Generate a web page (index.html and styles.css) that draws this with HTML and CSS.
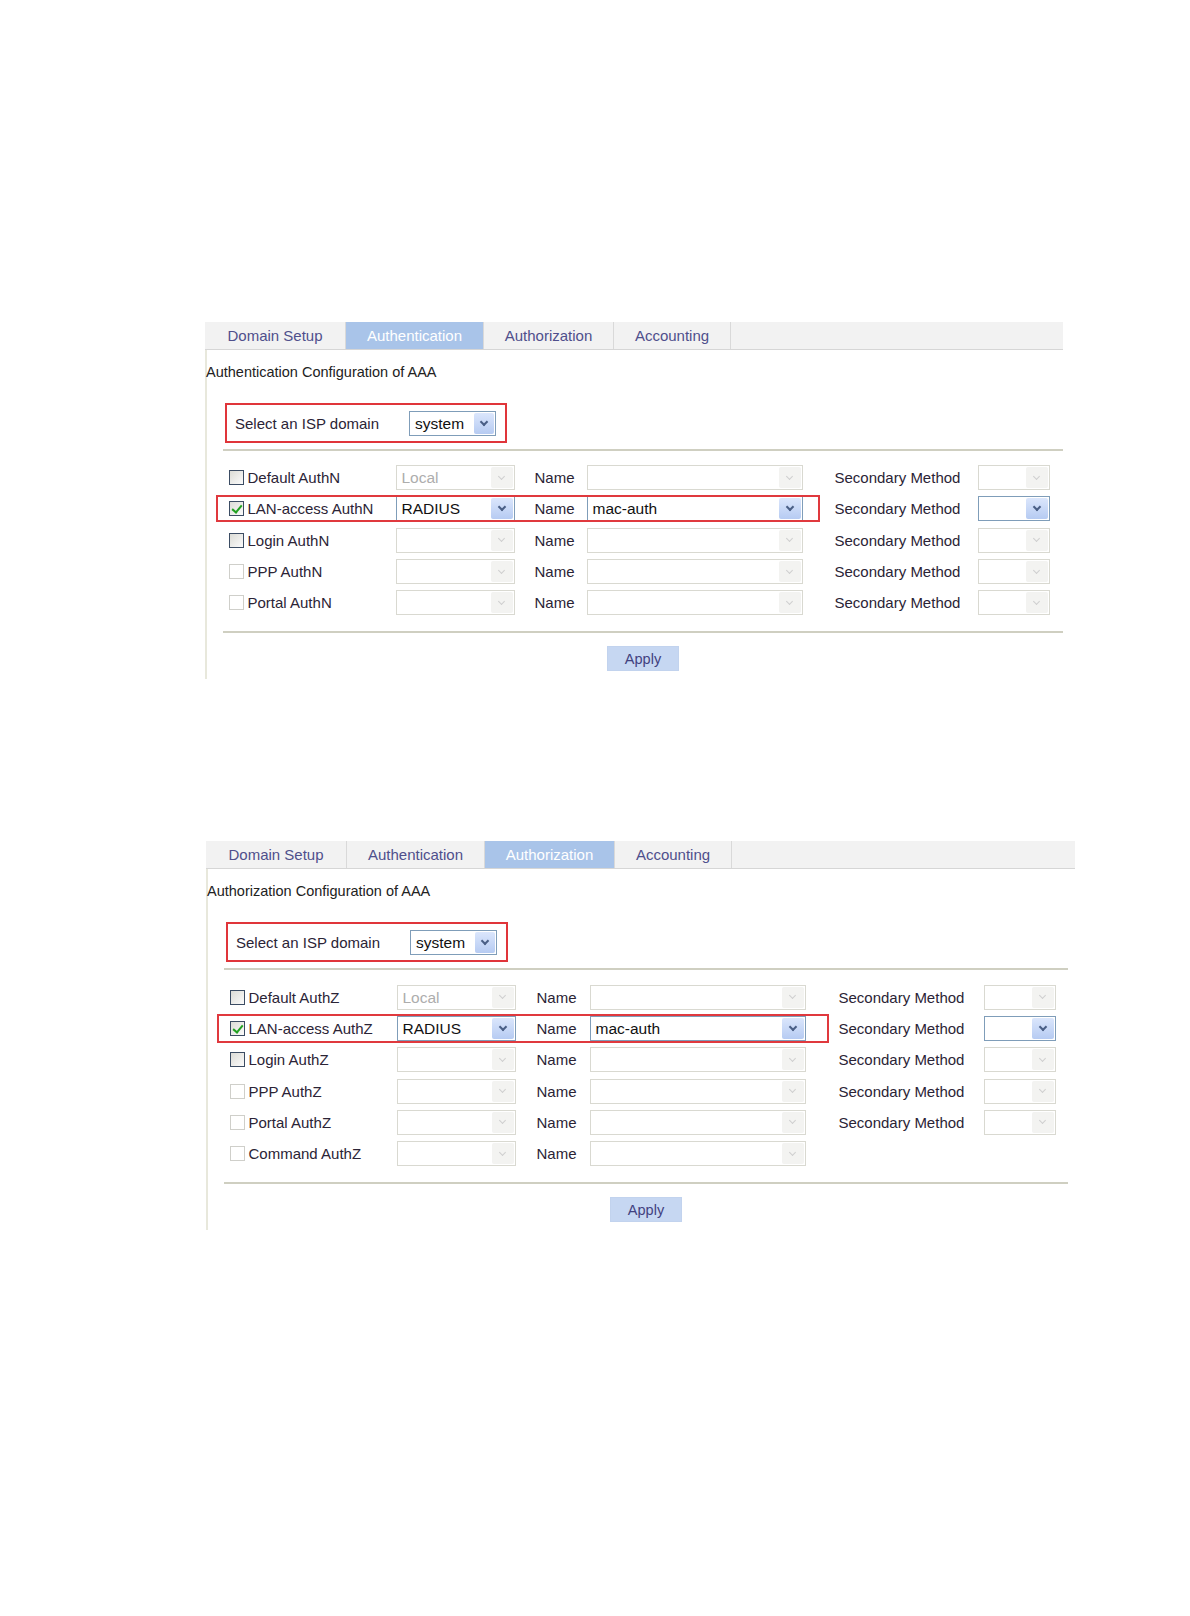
FILE: index.html
```html
<!DOCTYPE html>
<html lang="en">
<head>
    <meta charset="UTF-8">
    <title>AAA Configuration</title>
    <link rel="stylesheet" href="styles.css">
</head>
<body>
    <!-- Authentication tab -->
    <div class="panel panel-first">
        <div class="tabs">
            <div class="tab">Domain Setup</div>
            <div class="tab active">Authentication</div>
            <div class="tab">Authorization</div>
            <div class="tab">Accounting</div>
        </div>
        <div class="panel-body">
            <div class="title">Authentication Configuration of AAA</div>
            <div class="domain-box">
                <span class="domain-label">Select an ISP domain</span>
                <div class="select select-domain"><span class="value">system</span><span class="arrow"></span></div>
            </div>
            <div class="rule"></div>
            <div class="rows">
                <div class="row">
                    <div class="check-cell"><span class="checkbox"></span>Default AuthN</div>
                    <div class="select select-method disabled"><span class="value">Local</span><span class="arrow"></span></div>
                    <div class="field-label">Name</div>
                    <div class="select select-name disabled"><span class="value"></span><span class="arrow"></span></div>
                    <div class="field-label secondary">Secondary Method</div>
                    <div class="select select-sec disabled"><span class="value"></span><span class="arrow"></span></div>
                </div>
                <div class="row marked">
                    <div class="check-cell"><span class="checkbox checked"></span>LAN-access AuthN</div>
                    <div class="select select-method"><span class="value">RADIUS</span><span class="arrow"></span></div>
                    <div class="field-label">Name</div>
                    <div class="select select-name"><span class="value">mac-auth</span><span class="arrow"></span></div>
                    <div class="field-label secondary">Secondary Method</div>
                    <div class="select select-sec"><span class="value"></span><span class="arrow"></span></div>
                </div>
                <div class="row">
                    <div class="check-cell"><span class="checkbox"></span>Login AuthN</div>
                    <div class="select select-method disabled"><span class="value"></span><span class="arrow"></span></div>
                    <div class="field-label">Name</div>
                    <div class="select select-name disabled"><span class="value"></span><span class="arrow"></span></div>
                    <div class="field-label secondary">Secondary Method</div>
                    <div class="select select-sec disabled"><span class="value"></span><span class="arrow"></span></div>
                </div>
                <div class="row">
                    <div class="check-cell"><span class="checkbox off"></span>PPP AuthN</div>
                    <div class="select select-method disabled"><span class="value"></span><span class="arrow"></span></div>
                    <div class="field-label">Name</div>
                    <div class="select select-name disabled"><span class="value"></span><span class="arrow"></span></div>
                    <div class="field-label secondary">Secondary Method</div>
                    <div class="select select-sec disabled"><span class="value"></span><span class="arrow"></span></div>
                </div>
                <div class="row">
                    <div class="check-cell"><span class="checkbox off"></span>Portal AuthN</div>
                    <div class="select select-method disabled"><span class="value"></span><span class="arrow"></span></div>
                    <div class="field-label">Name</div>
                    <div class="select select-name disabled"><span class="value"></span><span class="arrow"></span></div>
                    <div class="field-label secondary">Secondary Method</div>
                    <div class="select select-sec disabled"><span class="value"></span><span class="arrow"></span></div>
                </div>
            </div>
            <div class="rule rule-bottom"></div>
            <div class="actions"><button class="apply">Apply</button></div>
        </div>
    </div>

    <!-- Authorization tab -->
    <div class="panel panel-second">
        <div class="tabs">
            <div class="tab">Domain Setup</div>
            <div class="tab">Authentication</div>
            <div class="tab active">Authorization</div>
            <div class="tab">Accounting</div>
        </div>
        <div class="panel-body">
            <div class="title">Authorization Configuration of AAA</div>
            <div class="domain-box">
                <span class="domain-label">Select an ISP domain</span>
                <div class="select select-domain"><span class="value">system</span><span class="arrow"></span></div>
            </div>
            <div class="rule"></div>
            <div class="rows">
                <div class="row">
                    <div class="check-cell"><span class="checkbox"></span>Default AuthZ</div>
                    <div class="select select-method disabled"><span class="value">Local</span><span class="arrow"></span></div>
                    <div class="field-label">Name</div>
                    <div class="select select-name disabled"><span class="value"></span><span class="arrow"></span></div>
                    <div class="field-label secondary">Secondary Method</div>
                    <div class="select select-sec disabled"><span class="value"></span><span class="arrow"></span></div>
                </div>
                <div class="row marked">
                    <div class="check-cell"><span class="checkbox checked"></span>LAN-access AuthZ</div>
                    <div class="select select-method"><span class="value">RADIUS</span><span class="arrow"></span></div>
                    <div class="field-label">Name</div>
                    <div class="select select-name"><span class="value">mac-auth</span><span class="arrow"></span></div>
                    <div class="field-label secondary">Secondary Method</div>
                    <div class="select select-sec"><span class="value"></span><span class="arrow"></span></div>
                </div>
                <div class="row">
                    <div class="check-cell"><span class="checkbox"></span>Login AuthZ</div>
                    <div class="select select-method disabled"><span class="value"></span><span class="arrow"></span></div>
                    <div class="field-label">Name</div>
                    <div class="select select-name disabled"><span class="value"></span><span class="arrow"></span></div>
                    <div class="field-label secondary">Secondary Method</div>
                    <div class="select select-sec disabled"><span class="value"></span><span class="arrow"></span></div>
                </div>
                <div class="row">
                    <div class="check-cell"><span class="checkbox off"></span>PPP AuthZ</div>
                    <div class="select select-method disabled"><span class="value"></span><span class="arrow"></span></div>
                    <div class="field-label">Name</div>
                    <div class="select select-name disabled"><span class="value"></span><span class="arrow"></span></div>
                    <div class="field-label secondary">Secondary Method</div>
                    <div class="select select-sec disabled"><span class="value"></span><span class="arrow"></span></div>
                </div>
                <div class="row">
                    <div class="check-cell"><span class="checkbox off"></span>Portal AuthZ</div>
                    <div class="select select-method disabled"><span class="value"></span><span class="arrow"></span></div>
                    <div class="field-label">Name</div>
                    <div class="select select-name disabled"><span class="value"></span><span class="arrow"></span></div>
                    <div class="field-label secondary">Secondary Method</div>
                    <div class="select select-sec disabled"><span class="value"></span><span class="arrow"></span></div>
                </div>
                <div class="row">
                    <div class="check-cell"><span class="checkbox off"></span>Command AuthZ</div>
                    <div class="select select-method disabled"><span class="value"></span><span class="arrow"></span></div>
                    <div class="field-label">Name</div>
                    <div class="select select-name disabled"><span class="value"></span><span class="arrow"></span></div>
                </div>
            </div>
            <div class="rule rule-bottom"></div>
            <div class="actions"><button class="apply">Apply</button></div>
        </div>
    </div>
</body>
</html>
```

FILE: styles.css
```css
body {
    margin: 0;
    background-color: #fff;
    font-family: "Liberation Sans", Arial, sans-serif;
    font-size: 15px;
    color: #2b2436;
}
.panel {
    width: 858px;
}
.panel-first {
    margin: 322px 0 0 205px;
}
.panel-second {
    width: 869px;
    margin: 162px 0 0 206px;
}

/* tab strip */
.tabs {
    display: flex;
    height: 27px;
    background-color: #f2f2f2;
    border-bottom: 1px solid #d6d6d6;
}
.tab {
    width: 140px;
    line-height: 28px;
    text-align: center;
    color: #4f4f8c;
    border-right: 1px solid #d9d9d9;
}
.tab:nth-child(2) {
    width: 137px;
}
.tab:nth-child(3) {
    width: 129px;
}
.tab:nth-child(4) {
    width: 116px;
}
.tab.active {
    background-color: #a9c4e9;
    color: #fff;
}

.panel-body {
    border-left: 2px solid #e8e8dc;
    padding-bottom: 8px;
}
.title {
    padding-top: 13px;
    line-height: 18px;
    margin-left: -1px;
    font-size: 14.5px;
    color: #222;
}

/* isp domain */
.domain-box {
    display: flex;
    align-items: center;
    width: 282px;
    height: 40px;
    box-sizing: border-box;
    margin: 22px 0 0 18px;
    padding-left: 8px;
    border: 2px solid #e0353a;
}
.domain-label {
    width: 174px;
    white-space: nowrap;
}

.rule {
    width: 840px;
    margin: 6px 0 0 16px;
    border-top: 2px solid #cfcfc1;
}
.panel-second .rule {
    width: 844px;
}
.rule-bottom {
    margin-top: 13px;
}

/* rows */
.rows {
    margin-left: 17.5px;
    padding-top: 11px;
}
.row {
    display: grid;
    grid-template-columns: 171px 119px 72px 216px 175px 72px;
    align-items: center;
    height: 31.3px;
    position: relative;
}
.panel-second .row {
    grid-template-columns: 171px 120px 73px 217px 177px 72px;
}
.row.marked::after {
    content: "";
    position: absolute;
    left: -9px;
    top: 2px;
    width: 604px;
    height: 27px;
    box-sizing: border-box;
    border: 2px solid #e0393e;
    pointer-events: none;
}
.panel-second .row.marked::after {
    width: 612px;
    height: 29px;
    top: 1px;
}
.check-cell {
    display: flex;
    align-items: center;
    padding-left: 4px;
    white-space: nowrap;
}
.checkbox {
    width: 15px;
    height: 15px;
    flex: none;
    box-sizing: border-box;
    margin-right: 4px;
    border: 1px solid #3b4c63;
    background: linear-gradient(135deg, #dcdcd6, #fbfbfb);
    position: relative;
}
.checkbox.off {
    border-color: #cfcfca;
    background: #fff;
}
.checkbox.checked::after {
    content: "";
    position: absolute;
    left: 4px;
    top: 1px;
    width: 4px;
    height: 8px;
    border-right: 2px solid #21a121;
    border-bottom: 2px solid #21a121;
    transform: rotate(40deg);
}
.field-label {
    padding-left: 20px;
    white-space: nowrap;
}
.field-label.secondary {
    padding-left: 32px;
}

/* select boxes */
.select {
    display: flex;
    height: 25px;
    box-sizing: border-box;
    border: 1px solid #7f9db9;
    background-color: #fff;
    font-size: 15.5px;
    color: #111;
}
.select .value {
    flex: 1;
    padding-left: 5px;
    line-height: 23px;
    overflow: hidden;
    white-space: nowrap;
}
.select .arrow {
    width: 22px;
    margin: 1px;
    display: flex;
    align-items: center;
    justify-content: center;
    background: linear-gradient(#dbe6fc, #b6cbf2);
    border-radius: 2px;
}
.select .arrow::after {
    content: "";
    width: 4px;
    height: 4px;
    margin-top: -3px;
    border-right: 2px solid #4a5f86;
    border-bottom: 2px solid #4a5f86;
    transform: rotate(45deg);
}
.select.disabled {
    border-color: #d9d9d1;
}
.select.disabled .value {
    color: #adadad;
}
.select.disabled .arrow {
    background: #f3f3f1;
}
.select.disabled .arrow::after {
    border-color: #cfcfcf;
    border-width: 0 1px 1px 0;
}
.select-domain {
    width: 87px;
}
.select-domain .arrow {
    width: 20px;
}
.select-method {
    width: 119px;
}
.select-name {
    width: 216px;
}
.select-sec {
    width: 72px;
}

/* apply */
.actions {
    width: 840px;
    margin: 13px 0 0 16px;
    text-align: center;
}
.panel-second .actions {
    width: 844px;
}
.apply {
    width: 72px;
    height: 25px;
    border: 1px solid #c2d3ee;
    background-color: #c6d7f2;
    color: #41417f;
    font-family: "Liberation Sans", Arial, sans-serif;
    font-size: 14.5px;
    padding: 0;
}
```
